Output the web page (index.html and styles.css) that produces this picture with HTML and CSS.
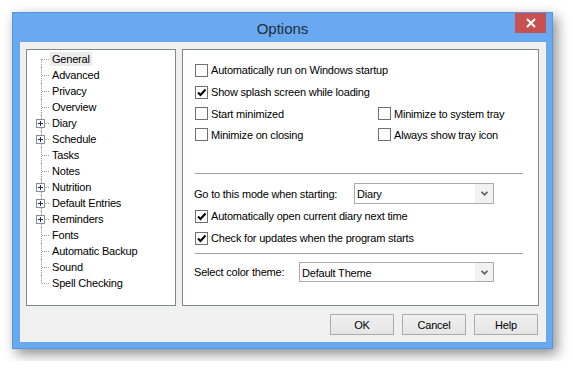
FILE: index.html
```html
<!DOCTYPE html>
<html>
<head>
<meta charset="utf-8">
<link rel="stylesheet" href="styles.css">
</head>
<body>
<div class="window">
  <div class="titlebar">
    <span></span>
    <div class="title">Options</div>
    <div class="close"><svg width="10" height="10" viewBox="0 0 10 10"><path d="M1 1 L9 9 M9 1 L1 9" stroke="#fff" stroke-width="2"/></svg></div>
  </div>
  <div class="client">
    <div class="panes">
      <ul class="tree">
        <li class="node first"><span class="conn"></span><span class="label selected">General</span></li>
        <li class="node"><span class="conn"></span><span class="label">Advanced</span></li>
        <li class="node"><span class="conn"></span><span class="label">Privacy</span></li>
        <li class="node"><span class="conn"></span><span class="label">Overview</span></li>
        <li class="node"><span class="conn"><svg class="plus" width="9" height="9" viewBox="0 0 9 9"><rect x="0.5" y="0.5" width="8" height="8" fill="#f7f7f7" stroke="#8e8f8f"/><path d="M2 4.5 H7 M4.5 2 V7" stroke="#1e2a5a"/></svg></span><span class="label">Diary</span></li>
        <li class="node"><span class="conn"><svg class="plus" width="9" height="9" viewBox="0 0 9 9"><rect x="0.5" y="0.5" width="8" height="8" fill="#f7f7f7" stroke="#8e8f8f"/><path d="M2 4.5 H7 M4.5 2 V7" stroke="#1e2a5a"/></svg></span><span class="label">Schedule</span></li>
        <li class="node"><span class="conn"></span><span class="label">Tasks</span></li>
        <li class="node"><span class="conn"></span><span class="label">Notes</span></li>
        <li class="node"><span class="conn"><svg class="plus" width="9" height="9" viewBox="0 0 9 9"><rect x="0.5" y="0.5" width="8" height="8" fill="#f7f7f7" stroke="#8e8f8f"/><path d="M2 4.5 H7 M4.5 2 V7" stroke="#1e2a5a"/></svg></span><span class="label">Nutrition</span></li>
        <li class="node"><span class="conn"><svg class="plus" width="9" height="9" viewBox="0 0 9 9"><rect x="0.5" y="0.5" width="8" height="8" fill="#f7f7f7" stroke="#8e8f8f"/><path d="M2 4.5 H7 M4.5 2 V7" stroke="#1e2a5a"/></svg></span><span class="label">Default Entries</span></li>
        <li class="node"><span class="conn"><svg class="plus" width="9" height="9" viewBox="0 0 9 9"><rect x="0.5" y="0.5" width="8" height="8" fill="#f7f7f7" stroke="#8e8f8f"/><path d="M2 4.5 H7 M4.5 2 V7" stroke="#1e2a5a"/></svg></span><span class="label">Reminders</span></li>
        <li class="node"><span class="conn"></span><span class="label">Fonts</span></li>
        <li class="node"><span class="conn"></span><span class="label">Automatic Backup</span></li>
        <li class="node"><span class="conn"></span><span class="label">Sound</span></li>
        <li class="node last"><span class="conn"></span><span class="label">Spell Checking</span></li>
      </ul>
      <div class="settings">
        <div class="grid">
          <label class="check wide"><span class="box"></span>Automatically run on Windows startup</label>
          <label class="check wide"><span class="box"><svg width="11" height="11" viewBox="0 0 11 11"><path d="M2 5.5 L4.5 8 L9.5 2.5" fill="none" stroke="#000" stroke-width="2"/></svg></span>Show splash screen while loading</label>
          <label class="check"><span class="box"></span>Start minimized</label>
          <label class="check"><span class="box"></span>Minimize to system tray</label>
          <label class="check"><span class="box"></span>Minimize on closing</label>
          <label class="check"><span class="box"></span>Always show tray icon</label>
        </div>
        <hr class="sep sep-top">
        <div class="field field-mode">
          <span class="field-label label-mode">Go to this mode when starting:</span>
          <div class="combo combo-mode"><span class="combo-text">Diary</span><span class="arrow"><svg width="7" height="5" viewBox="0 0 7 5"><path d="M0.5 0.8 L3.5 3.8 L6.5 0.8" fill="none" stroke="#606060" stroke-width="1.6"/></svg></span></div>
        </div>
        <label class="check row first-row"><span class="box"><svg width="11" height="11" viewBox="0 0 11 11"><path d="M2 5.5 L4.5 8 L9.5 2.5" fill="none" stroke="#000" stroke-width="2"/></svg></span>Automatically open current diary next time</label>
        <label class="check row"><span class="box"><svg width="11" height="11" viewBox="0 0 11 11"><path d="M2 5.5 L4.5 8 L9.5 2.5" fill="none" stroke="#000" stroke-width="2"/></svg></span>Check for updates when the program starts</label>
        <hr class="sep sep-bottom">
        <div class="field field-theme">
          <span class="field-label label-theme">Select color theme:</span>
          <div class="combo combo-theme"><span class="combo-text">Default Theme</span><span class="arrow"><svg width="7" height="5" viewBox="0 0 7 5"><path d="M0.5 0.8 L3.5 3.8 L6.5 0.8" fill="none" stroke="#606060" stroke-width="1.6"/></svg></span></div>
        </div>
      </div>
    </div>
    <div class="buttons">
      <button class="btn">OK</button>
      <button class="btn">Cancel</button>
      <button class="btn">Help</button>
    </div>
  </div>
</div>
</body>
</html>
```
FILE: styles.css
```css
* { box-sizing: border-box; }
html, body { margin: 0; padding: 0; background: #fff; }
body {
  padding: 12px;
  font-family: "Liberation Sans", Arial, sans-serif;
  font-size: 11px;
  letter-spacing: -0.2px;
  color: #000;
}
.window {
  width: 541px;
  height: 337px;
  background: #68a9f2;
  border: 1px solid #5596df;
  padding: 0 6px 6px 7px;
  box-shadow: 4px 5px 12px rgba(0,0,0,0.45);
  display: flex;
  flex-direction: column;
}
.titlebar {
  height: 29px;
  display: grid;
  grid-template-columns: 1fr auto 1fr;
  align-items: center;
  margin: 0 -6px 0 -7px;
  padding: 0 6px 0 6px;
}
.title {
  font-size: 15px;
  letter-spacing: 0;
  color: #222c3a;
  padding-top: 1px;
}
.close {
  justify-self: end;
  align-self: start;
  width: 31px;
  height: 20px;
  background: #c75050;
  display: flex;
  align-items: center;
  justify-content: center;
}
.client {
  height: 300px;
  background: #f0f0f0;
  padding: 7px 7px 7px 6px;
  display: flex;
  flex-direction: column;
}
.panes {
  height: 257px;
  display: flex;
  gap: 6px;
}
.tree {
  list-style: none;
  margin: 0;
  width: 150px;
  flex: none;
  background: #fff;
  border: 1px solid #828790;
  padding: 1px 0 0 0;
}
.node {
  display: flex;
  height: 16px;
  align-items: center;
}
.conn {
  position: relative;
  width: 23px;
  height: 16px;
  flex: none;
}
.conn::before {
  content: "";
  position: absolute;
  left: 14px;
  top: 0;
  bottom: 0;
  border-left: 1px dotted #a0a0a0;
}
.first .conn::before { top: 8px; }
.last .conn::before { bottom: 8px; }
.conn::after {
  content: "";
  position: absolute;
  left: 15px;
  top: 8px;
  width: 7px;
  border-top: 1px dotted #a0a0a0;
}
.plus {
  position: absolute;
  left: 9px;
  top: 4px;
  z-index: 1;
  display: block;
}
.label {
  line-height: 14px;
  padding: 0 2px 0 2px;
  white-space: nowrap;
}
.label.selected { background: #ebebeb; }
.settings {
  flex: 1;
  background: #fff;
  border: 1px solid #828790;
  padding: 9px 15px 0 12px;
  display: flex;
  flex-direction: column;
}
.grid {
  display: grid;
  grid-template-columns: 183px 1fr;
  grid-template-rows: 22px 22px 21px 21px;
}
.wide { grid-column: 1 / -1; }
.check {
  display: flex;
  align-items: center;
  gap: 3px;
  white-space: nowrap;
}
.box {
  width: 13px;
  height: 13px;
  flex: none;
  border: 1px solid #707070;
  background: #fff;
  display: flex;
  align-items: center;
  justify-content: center;
}
.box svg { display: block; }
.sep {
  border: 0;
  border-top: 1px solid #a0a0a0;
  height: 0;
  margin: 0;
}
.sep-top { margin-top: 28px; }
.sep-bottom { margin-top: 4px; }
.field {
  display: flex;
  align-items: center;
}
.field-mode { margin-top: 9px; height: 21px; }
.field-theme { margin-top: 8px; height: 20px; }
.field-label { flex: none; margin-left: -1px; }
.label-mode { width: 160px; }
.label-theme { width: 105px; }
.combo {
  height: 100%;
  border: 1px solid #acacac;
  background: #fff;
  display: flex;
  align-items: center;
}
.combo-mode { width: 140px; }
.combo-theme { width: 195px; }
.combo-text { flex: 1; padding-left: 2px; padding-top: 1px; }
.arrow {
  width: 18px;
  height: 100%;
  background: #f2f2f2;
  display: flex;
  align-items: center;
  justify-content: center;
}
.arrow svg { display: block; }
.row { height: 22px; }
.first-row { margin-top: 1px; }
.buttons {
  margin-top: 8px;
  display: flex;
  justify-content: flex-end;
  gap: 8px;
  padding-right: 1px;
}
.btn {
  width: 64px;
  height: 21px;
  border: 1px solid #acacac;
  background: linear-gradient(#f0f0f0, #e5e5e5);
  font-family: "Liberation Sans", Arial, sans-serif;
  font-size: 11px;
  letter-spacing: -0.2px;
  color: #000;
  padding: 0;
  margin: 0;
}
```
